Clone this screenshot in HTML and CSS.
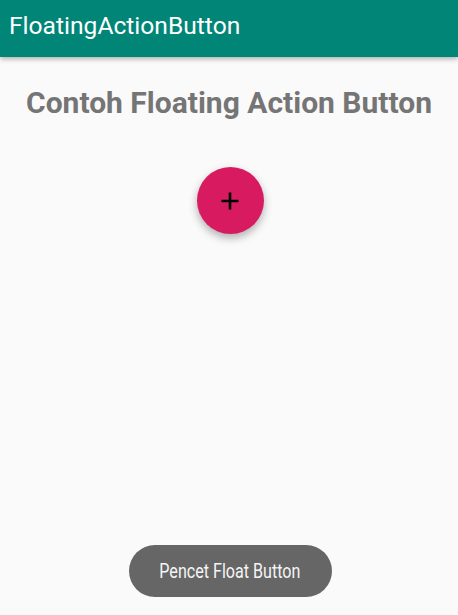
FILE: index.html
```html
<!DOCTYPE html>
<html>
<head>
    <title>FloatingActionButton</title>
    <link rel="stylesheet" href="styles.css">
</head>
<body>
    <div class="app-bar">
        <span class="app-title">FloatingActionButton</span>
    </div>

    <div class="content">
        <h1>Contoh Floating Action Button</h1>
        <button class="fab" type="button" aria-label="Tambah">
            <svg width="18" height="18" viewBox="0 0 18 18">
                <path d="M9 0.5v17M0.5 9h17" stroke="#000" stroke-width="2.6" fill="none"/>
            </svg>
        </button>
    </div>

    <div class="toast">
        <span class="toast-text">Pencet Float Button</span>
    </div>
</body>
</html>
```

FILE: styles.css
```css
body {
    margin: 0;
    height: 615px;
    font-family: Roboto, "Noto Sans", sans-serif;
    background-color: #FAFAFA;
    display: flex;
    flex-direction: column;
    overflow: hidden;
}

.app-bar {
    height: 57px;
    background-color: #008577;
    box-shadow: 0 2px 5px rgba(0, 0, 0, 0.3);
    display: flex;
    align-items: center;
    padding-left: 9px;
    position: relative;
    z-index: 1;
}

.app-title {
    color: #FFFFFF;
    font-size: 24.6px;
    margin-top: -6px;
}

.content {
    flex: 1;
    display: flex;
    flex-direction: column;
    align-items: center;
}

h1 {
    margin: 28px 0 0;
    font-size: 30px;
    font-weight: bold;
    color: #757575;
    line-height: 36px;
}

.fab {
    margin-top: 46px;
    margin-left: 2px;
    width: 67px;
    height: 67px;
    border: none;
    border-radius: 50%;
    background-color: #D81B60;
    box-shadow: 0 4px 8px rgba(0, 0, 0, 0.3);
    display: flex;
    align-items: center;
    justify-content: center;
    padding: 0;
}

.toast {
    align-self: center;
    margin: 0 0 18px 2px;
    width: 203px;
    height: 52px;
    border-radius: 26px;
    background-color: #666666;
    display: flex;
    align-items: center;
    justify-content: center;
}

.toast-text {
    color: #F5F5F5;
    font-size: 20.5px;
    display: inline-block;
    transform: scaleX(0.785);
    white-space: nowrap;
}
```
